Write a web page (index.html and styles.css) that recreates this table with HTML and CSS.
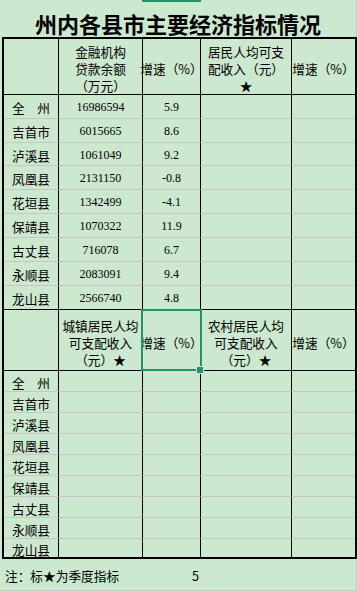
FILE: index.html
```html
<!DOCTYPE html>
<html lang="zh-CN">
<head>
<meta charset="utf-8">
<title>州内各县市主要经济指标情况</title>
<link rel="stylesheet" href="styles.css">
</head>
<body>
<div class="sheet">
  <div class="col-mark"></div>
  <h1 class="title">州内各县市主要经济指标情况</h1>
  <div class="table">
    <div class="row head">
      <div class="cell"></div>
      <div class="cell">金融机构<br>贷款余额<br>（万元）</div>
      <div class="cell">增速（%）</div>
      <div class="cell">居民人均可支<br>配收入（元）<br>★</div>
      <div class="cell">增速（%）</div>
    </div>
    <div class="row"><div class="cell">全　州</div><div class="cell num">16986594</div><div class="cell num">5.9</div><div class="cell"></div><div class="cell"></div></div>
    <div class="row"><div class="cell">吉首市</div><div class="cell num">6015665</div><div class="cell num">8.6</div><div class="cell"></div><div class="cell"></div></div>
    <div class="row"><div class="cell">泸溪县</div><div class="cell num">1061049</div><div class="cell num">9.2</div><div class="cell"></div><div class="cell"></div></div>
    <div class="row"><div class="cell">凤凰县</div><div class="cell num">2131150</div><div class="cell num">-0.8</div><div class="cell"></div><div class="cell"></div></div>
    <div class="row"><div class="cell">花垣县</div><div class="cell num">1342499</div><div class="cell num">-4.1</div><div class="cell"></div><div class="cell"></div></div>
    <div class="row"><div class="cell">保靖县</div><div class="cell num">1070322</div><div class="cell num">11.9</div><div class="cell"></div><div class="cell"></div></div>
    <div class="row"><div class="cell">古丈县</div><div class="cell num">716078</div><div class="cell num">6.7</div><div class="cell"></div><div class="cell"></div></div>
    <div class="row"><div class="cell">永顺县</div><div class="cell num">2083091</div><div class="cell num">9.4</div><div class="cell"></div><div class="cell"></div></div>
    <div class="row end"><div class="cell">龙山县</div><div class="cell num">2566740</div><div class="cell num">4.8</div><div class="cell"></div><div class="cell"></div></div>
    <div class="row head">
      <div class="cell"></div>
      <div class="cell">城镇居民人均<br>可支配收入<br>（元）★</div>
      <div class="cell">增速（%）</div>
      <div class="cell">农村居民人均<br>可支配收入<br>（元）★</div>
      <div class="cell">增速（%）</div>
    </div>
    <div class="row"><div class="cell">全　州</div><div class="cell"></div><div class="cell"></div><div class="cell"></div><div class="cell"></div></div>
    <div class="row"><div class="cell">吉首市</div><div class="cell"></div><div class="cell"></div><div class="cell"></div><div class="cell"></div></div>
    <div class="row"><div class="cell">泸溪县</div><div class="cell"></div><div class="cell"></div><div class="cell"></div><div class="cell"></div></div>
    <div class="row"><div class="cell">凤凰县</div><div class="cell"></div><div class="cell"></div><div class="cell"></div><div class="cell"></div></div>
    <div class="row"><div class="cell">花垣县</div><div class="cell"></div><div class="cell"></div><div class="cell"></div><div class="cell"></div></div>
    <div class="row"><div class="cell">保靖县</div><div class="cell"></div><div class="cell"></div><div class="cell"></div><div class="cell"></div></div>
    <div class="row"><div class="cell">古丈县</div><div class="cell"></div><div class="cell"></div><div class="cell"></div><div class="cell"></div></div>
    <div class="row"><div class="cell">永顺县</div><div class="cell"></div><div class="cell"></div><div class="cell"></div><div class="cell"></div></div>
    <div class="row last"><div class="cell">龙山县</div><div class="cell"></div><div class="cell"></div><div class="cell"></div><div class="cell"></div></div>
  </div>
  <div class="footer"><span class="note">注：标★为季度指标</span><span class="page-no">5</span></div>
  <div class="selection"><span class="handle"></span></div>
</div>
</body>
</html>
```

FILE: styles.css
```css
* { box-sizing: border-box; }
html, body { margin: 0; padding: 0; }
body {
  background: #cce8cf;
  font-family: "Noto Sans CJK SC", "Noto Sans", sans-serif;
  color: #000;
}
.sheet {
  position: relative;
  width: 358px;
  height: 591px;
  overflow: hidden;
  background: #cce8cf;
}
.col-mark {
  position: absolute;
  left: 142px;
  top: 0;
  width: 59px;
  height: 2px;
  background: #21926a;
}
.title {
  margin: 0;
  width: 357px;
  height: 37px;
  padding-top: 8px;
  border-right: 1px solid #c9c5c9;
  display: flex;
  align-items: center;
  justify-content: center;
  font-size: 22px;
  font-weight: 700;
  line-height: 22px;
  white-space: nowrap;
}
.table {
  margin-left: 2px;
  width: 355px;
  border: 2px solid #000;
  display: grid;
  grid-template-columns: 55px 84px 58px 91px 63px;
  grid-template-rows: 56px 24px 24px 23px 24px 24px 24px 24px 24px 24px 61px repeat(8, 21px) 18px;
}
.row { display: contents; }
.cell {
  border-right: 1px solid #000;
  border-bottom: 1px solid #c9c4ca;
  display: flex;
  align-items: center;
  justify-content: center;
  text-align: center;
  padding-top: 2px;
  font-size: 12.7px;
  line-height: 17px;
  white-space: nowrap;
}
.cell:nth-child(5) { border-right: 0; }
.head .cell { border-bottom-color: #000; padding-top: 4px; }
.end .cell { border-bottom-color: #000; }
.last .cell { border-bottom: 0; }
.num {
  font-family: "Liberation Serif", serif;
  font-size: 12px;
}
.footer {
  width: 357px;
  height: 32px;
  border-right: 1px solid #c9c5c9;
  border-bottom: 1px solid #c9c5c9;
  display: grid;
  grid-template-columns: 143px 58px;
  align-items: center;
  padding-top: 2px;
  font-size: 12.7px;
  line-height: 17px;
}
.note { padding-left: 5px; white-space: nowrap; }
.page-no { text-align: right; padding-right: 2px; }
.selection {
  position: absolute;
  left: 141px;
  top: 309px;
  width: 61px;
  height: 62px;
  border: 2px solid #21926a;
}
.handle {
  position: absolute;
  right: -3px;
  bottom: -4px;
  width: 6px;
  height: 6px;
  background: #21926a;
  outline: 1px solid #cce8cf;
}
```
